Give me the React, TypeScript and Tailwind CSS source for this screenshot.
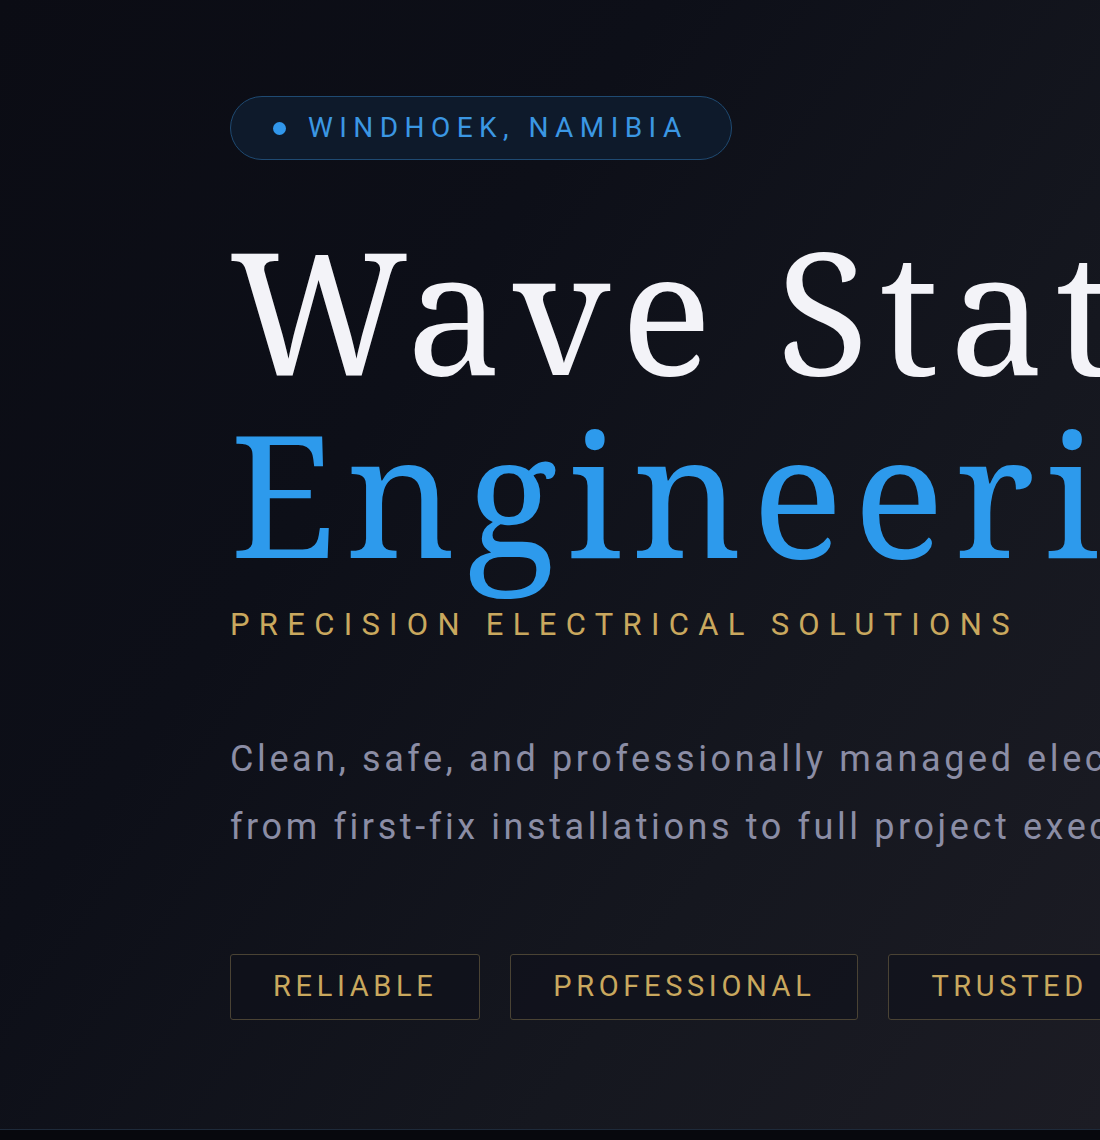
export default function App() {
  const tags = ['RELIABLE', 'PROFESSIONAL', 'TRUSTED'];

  return (
    <div className="min-h-screen w-full overflow-hidden bg-[#07080d]">
      <section className="relative h-[1130px] overflow-hidden border-b border-[#1e2a3a] bg-[linear-gradient(125deg,#0b0c14_0%,#0d0f18_35%,#15171f_70%,#1c1c24_100%)]">
        <div className="relative pl-[230px] pt-[96px]" style={{ fontFamily: 'Roboto, "Liberation Sans", sans-serif' }}>
          {/* location badge */}
          <div className="inline-flex h-[64px] w-[502px] items-center gap-[22px] rounded-full border border-[#1f4a72] bg-[#0e1a2b] pl-[42px]">
            <span className="h-[13px] w-[13px] rounded-full bg-[#3197eb]" />
            <span className="text-[28px] tracking-[0.23em] text-[#3b97e3]">WINDHOEK, NAMIBIA</span>
          </div>

          {/* headline */}
          <h1
            className="mt-[58px] whitespace-nowrap text-[170px] leading-[183px] tracking-[0.06em]"
            style={{ fontFamily: '"Noto Serif", "DejaVu Serif", "Liberation Serif", serif' }}
          >
            <span className="block text-[#f3f3f8]">Wave Station</span>
            <span className="block text-[#2d9aec]">Engineering</span>
          </h1>

          <p className="mt-[18px] whitespace-nowrap text-[31px] tracking-[0.3em] text-[#c9a85e]">
            PRECISION ELECTRICAL SOLUTIONS
          </p>

          {/* description */}
          <p className="mt-[76px] w-[1400px] text-[36px] leading-[68px] tracking-[0.1em] text-[#8b8da5]">
            Clean, safe, and professionally managed electrical services,
            <br />
            from first-fix installations to full project execution.
          </p>

          {/* value tags */}
          <div className="mt-[93px] flex gap-[30px]">
            {tags.map((t) => (
              <div
                key={t}
                className="flex h-[66px] items-center rounded-[3px] border border-[#4a4334] bg-[#0f111a]/60 px-[42px] text-[29px] tracking-[0.16em] text-[#c9a85e]"
              >
                {t}
              </div>
            ))}
          </div>
        </div>
      </section>
    </div>
  );
}
